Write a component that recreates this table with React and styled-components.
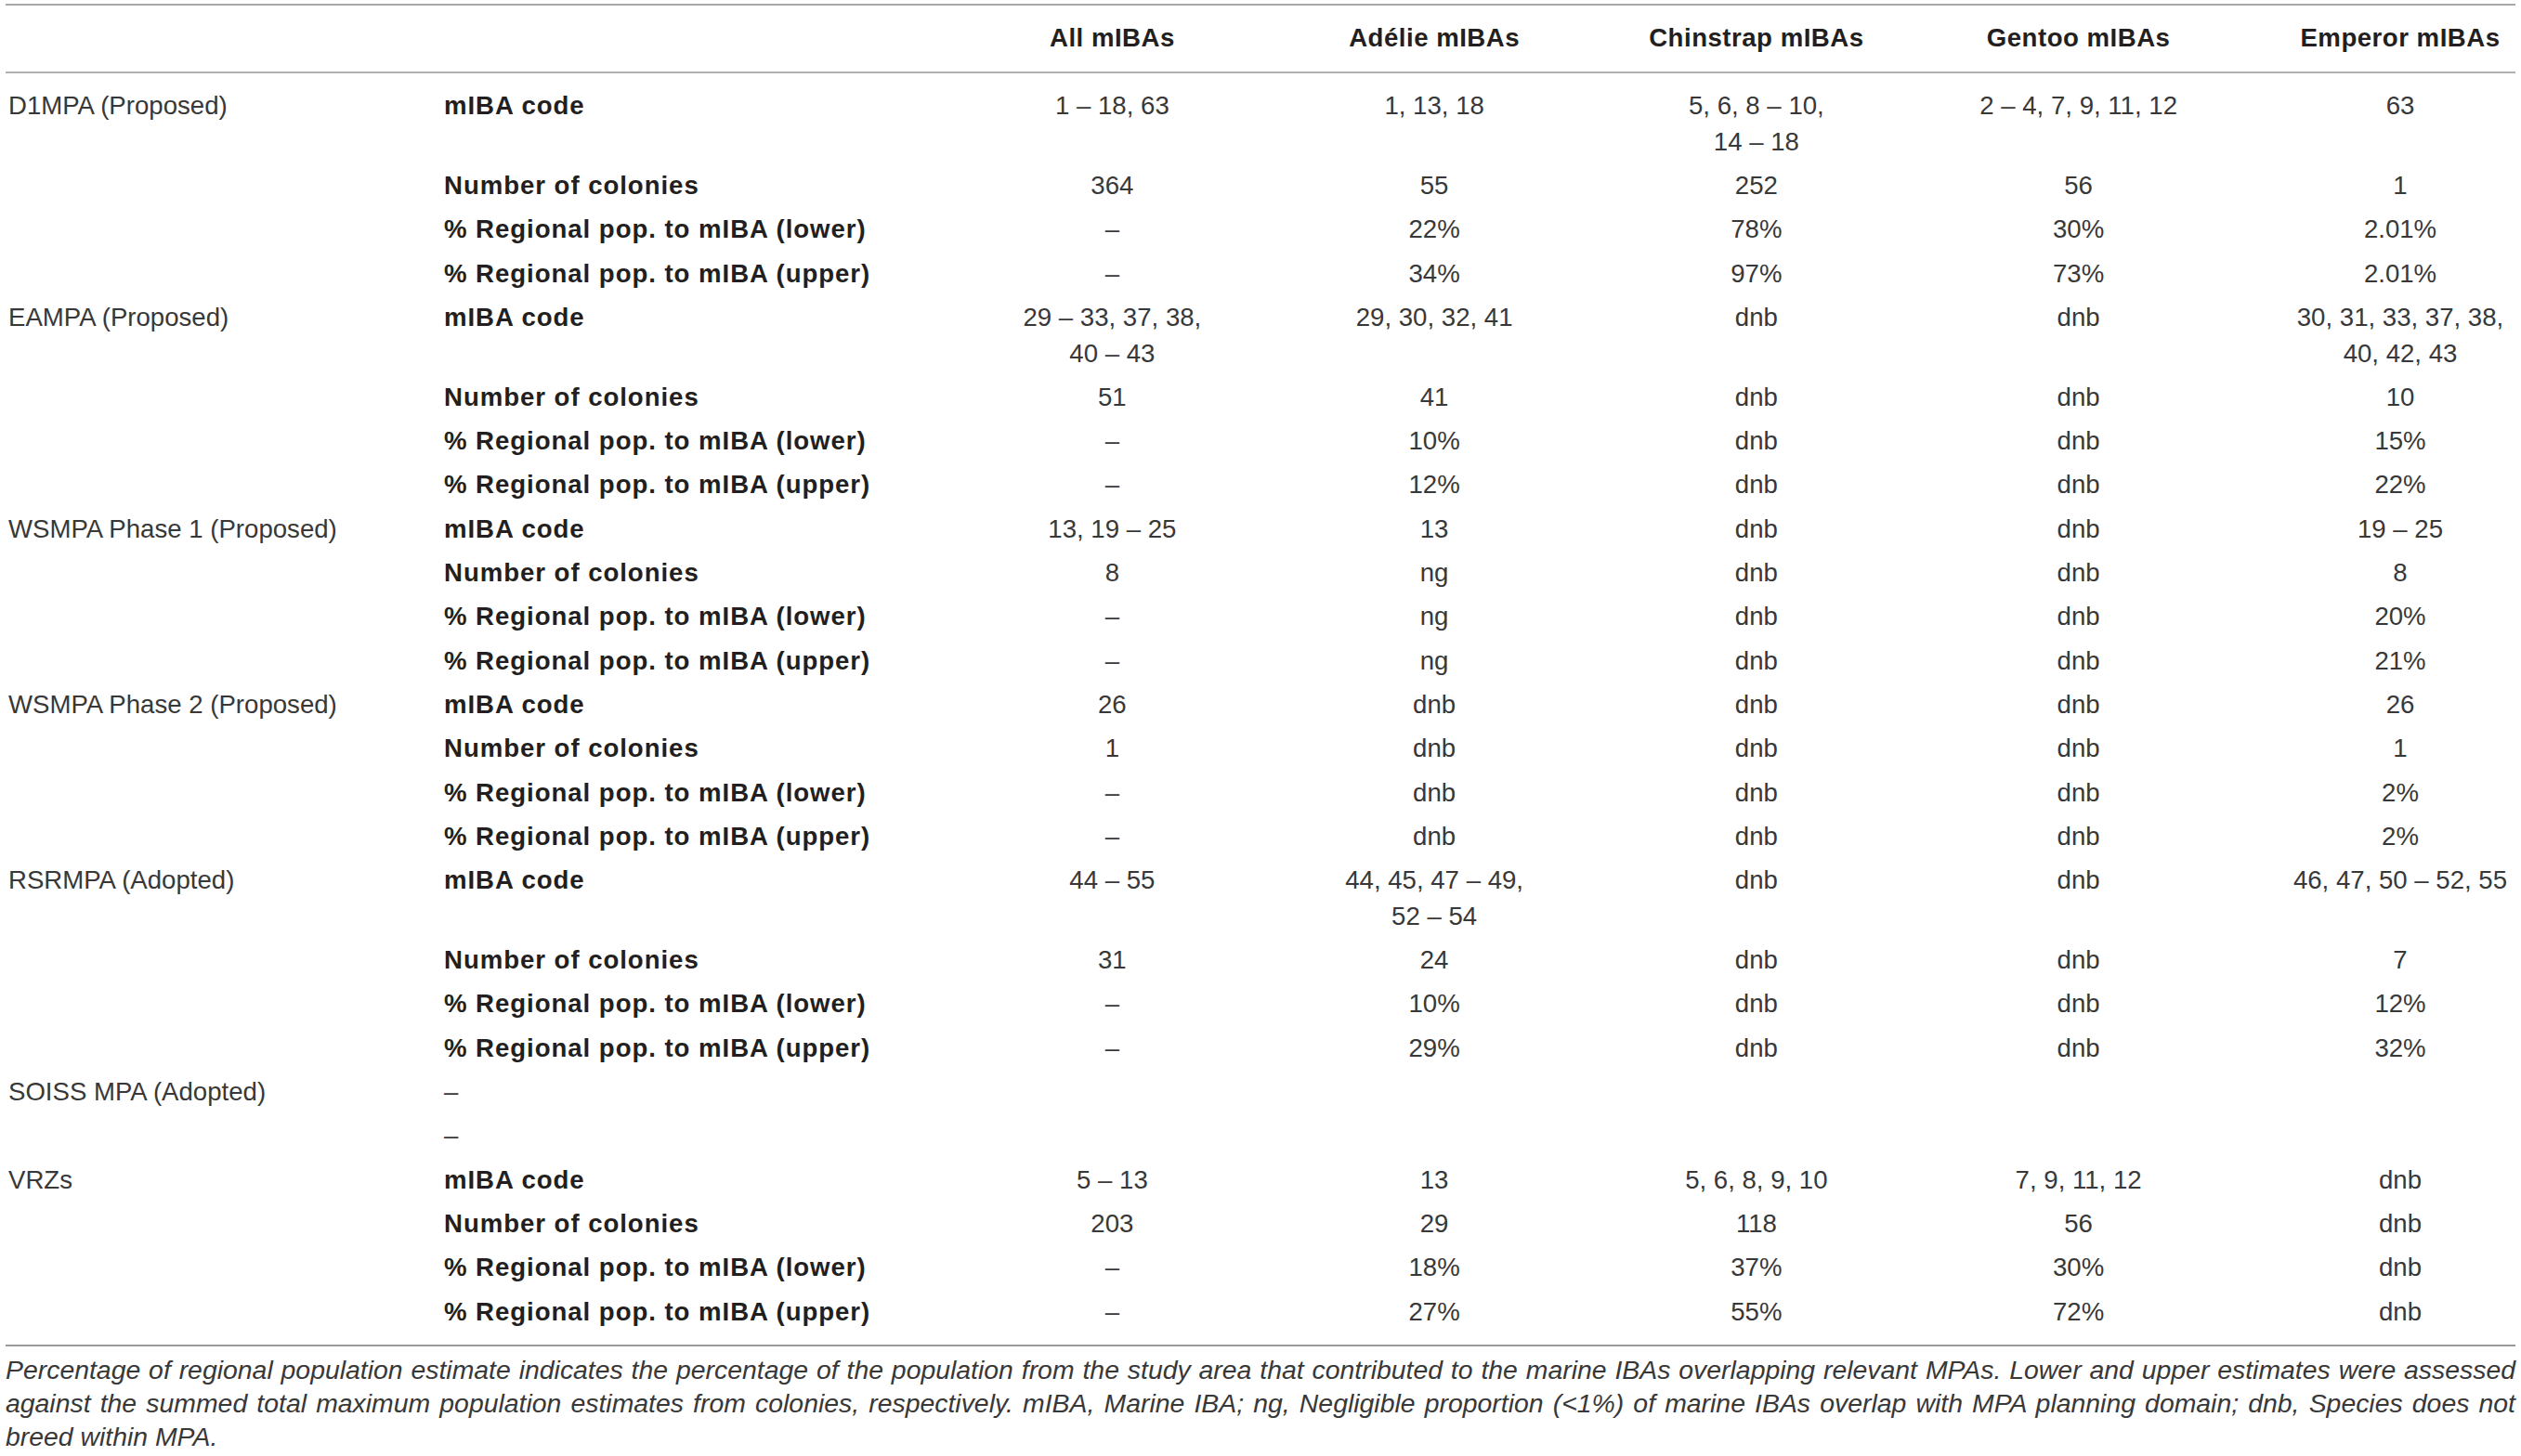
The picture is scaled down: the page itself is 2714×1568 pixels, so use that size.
import React from "react";
import styled, { createGlobalStyle } from "styled-components";

const GlobalStyle = createGlobalStyle`
  html, body {
    margin: 0;
    padding: 0;
    background: #ffffff;
  }
  body {
    font-family: "Liberation Sans", Arial, Helvetica, sans-serif;
    color: #231f20;
  }
`;

const Wrapper = styled.div`
  padding: 4px 6px 0 6px;
  width: 2702px;
`;

const Table = styled.table`
  width: 2702px;
  table-layout: fixed;
  border-collapse: collapse;
  font-size: 27.6px;
  line-height: 38.7px;
  border-bottom: 2px solid #9a9a9a;
`;

const Head = styled.thead`
  border-top: 2px solid #a8a8a8;
  border-bottom: 2px solid #b0b0b0;
`;

const HeadCell = styled.th`
  font-weight: 700;
  letter-spacing: 0.5px;
  color: #231f20;
  text-align: center;
  padding: 16px 0 16px ${(p) => (p.$last ? "49px" : "0")};
  white-space: nowrap;
`;

const Row = styled.tr`
  &:first-child td {
    padding-top: 16.3px;
  }
  &:last-child td {
    padding-bottom: 15.3px;
  }
`;

const GroupCell = styled.td`
  vertical-align: top;
  padding: 4.3px 0 4.3px 3px;
  color: #383838;
  white-space: nowrap;
`;

const MetricCell = styled.td`
  vertical-align: top;
  padding: 4.3px 0 4.3px 4px;
  font-weight: ${(p) => (p.$plain ? 400 : 700)};
  letter-spacing: ${(p) => (p.$plain ? "0" : "0.95px")};
  color: ${(p) => (p.$plain ? "#383838" : "#231f20")};
  white-space: nowrap;
`;

const ValueCell = styled.td`
  vertical-align: top;
  text-align: center;
  padding: 4.3px 0 4.3px ${(p) => (p.$last ? "49px" : "0")};
  color: #383838;
  white-space: pre-line;
`;

const Caption = styled.div`
  margin-top: 7px;
  font-size: 28.4px;
  line-height: 36.3px;
  font-style: italic;
  color: #383838;
`;

const CaptionLine = styled.span`
  display: block;
  text-align: ${(p) => (p.$last ? "left" : "justify")};
  text-align-last: ${(p) => (p.$last ? "left" : "justify")};
  white-space: ${(p) => (p.$last ? "nowrap" : "normal")};
`;

const headers = [
  "All mIBAs",
  "Adélie mIBAs",
  "Chinstrap mIBAs",
  "Gentoo mIBAs",
  "Emperor mIBAs",
];

const CODE = "mIBA code";
const COL = "Number of colonies";
const LOW = "% Regional pop. to mIBA (lower)";
const UP = "% Regional pop. to mIBA (upper)";

const groups = [
  {
    name: "D1MPA (Proposed)",
    rows: [
      [CODE, "1 – 18, 63", "1, 13, 18", "5, 6, 8 – 10,\n14 – 18", "2 – 4, 7, 9, 11, 12", "63"],
      [COL, "364", "55", "252", "56", "1"],
      [LOW, "–", "22%", "78%", "30%", "2.01%"],
      [UP, "–", "34%", "97%", "73%", "2.01%"],
    ],
  },
  {
    name: "EAMPA (Proposed)",
    rows: [
      [CODE, "29 – 33, 37, 38,\n40 – 43", "29, 30, 32, 41", "dnb", "dnb", "30, 31, 33, 37, 38,\n40, 42, 43"],
      [COL, "51", "41", "dnb", "dnb", "10"],
      [LOW, "–", "10%", "dnb", "dnb", "15%"],
      [UP, "–", "12%", "dnb", "dnb", "22%"],
    ],
  },
  {
    name: "WSMPA Phase 1 (Proposed)",
    rows: [
      [CODE, "13, 19 – 25", "13", "dnb", "dnb", "19 – 25"],
      [COL, "8", "ng", "dnb", "dnb", "8"],
      [LOW, "–", "ng", "dnb", "dnb", "20%"],
      [UP, "–", "ng", "dnb", "dnb", "21%"],
    ],
  },
  {
    name: "WSMPA Phase 2 (Proposed)",
    rows: [
      [CODE, "26", "dnb", "dnb", "dnb", "26"],
      [COL, "1", "dnb", "dnb", "dnb", "1"],
      [LOW, "–", "dnb", "dnb", "dnb", "2%"],
      [UP, "–", "dnb", "dnb", "dnb", "2%"],
    ],
  },
  {
    name: "RSRMPA (Adopted)",
    rows: [
      [CODE, "44 – 55", "44, 45, 47 – 49,\n52 – 54", "dnb", "dnb", "46, 47, 50 – 52, 55"],
      [COL, "31", "24", "dnb", "dnb", "7"],
      [LOW, "–", "10%", "dnb", "dnb", "12%"],
      [UP, "–", "29%", "dnb", "dnb", "32%"],
    ],
  },
  {
    name: "SOISS MPA (Adopted)",
    plain: true,
    rows: [
      ["–", "", "", "", "", ""],
      ["–", "", "", "", "", ""],
    ],
  },
  {
    name: "VRZs",
    rows: [
      [CODE, "5 – 13", "13", "5, 6, 8, 9, 10", "7, 9, 11, 12", "dnb"],
      [COL, "203", "29", "118", "56", "dnb"],
      [LOW, "–", "18%", "37%", "30%", "dnb"],
      [UP, "–", "27%", "55%", "72%", "dnb"],
    ],
  },
];

const captionLines = [
  "Percentage of regional population estimate indicates the percentage of the population from the study area that contributed to the marine IBAs overlapping relevant MPAs. Lower and upper estimates were assessed",
  "against the summed total maximum population estimates from colonies, respectively. mIBA, Marine IBA; ng, Negligible proportion (<1%) of marine IBAs overlap with MPA planning domain; dnb, Species does not",
  "breed within MPA.",
];

const colWidths = [468, 550, 346.75, 346.75, 346.75, 346.75, 297];

export default function App() {
  const bodyRows = [];
  groups.forEach((g, gi) => {
    g.rows.forEach((r, ri) => {
      bodyRows.push(
        <Row key={`${gi}-${ri}`}>
          <GroupCell>{ri === 0 ? g.name : ""}</GroupCell>
          <MetricCell $plain={g.plain}>{r[0]}</MetricCell>
          {r.slice(1).map((v, ci) => (
            <ValueCell key={ci} $last={ci === 4}>
              {v}
            </ValueCell>
          ))}
        </Row>
      );
    });
  });

  return (
    <>
      <GlobalStyle />
      <Wrapper>
        <Table>
          <colgroup>
            {colWidths.map((w, i) => (
              <col key={i} style={{ width: `${w}px` }} />
            ))}
          </colgroup>
          <Head>
            <tr>
              <HeadCell />
              <HeadCell />
              {headers.map((h, i) => (
                <HeadCell key={h} $last={i === 4}>
                  {h}
                </HeadCell>
              ))}
            </tr>
          </Head>
          <tbody>{bodyRows}</tbody>
        </Table>
        <Caption>
          {captionLines.map((l, i) => (
            <CaptionLine key={i} $last={i === captionLines.length - 1}>
              {l}
            </CaptionLine>
          ))}
        </Caption>
      </Wrapper>
    </>
  );
}
